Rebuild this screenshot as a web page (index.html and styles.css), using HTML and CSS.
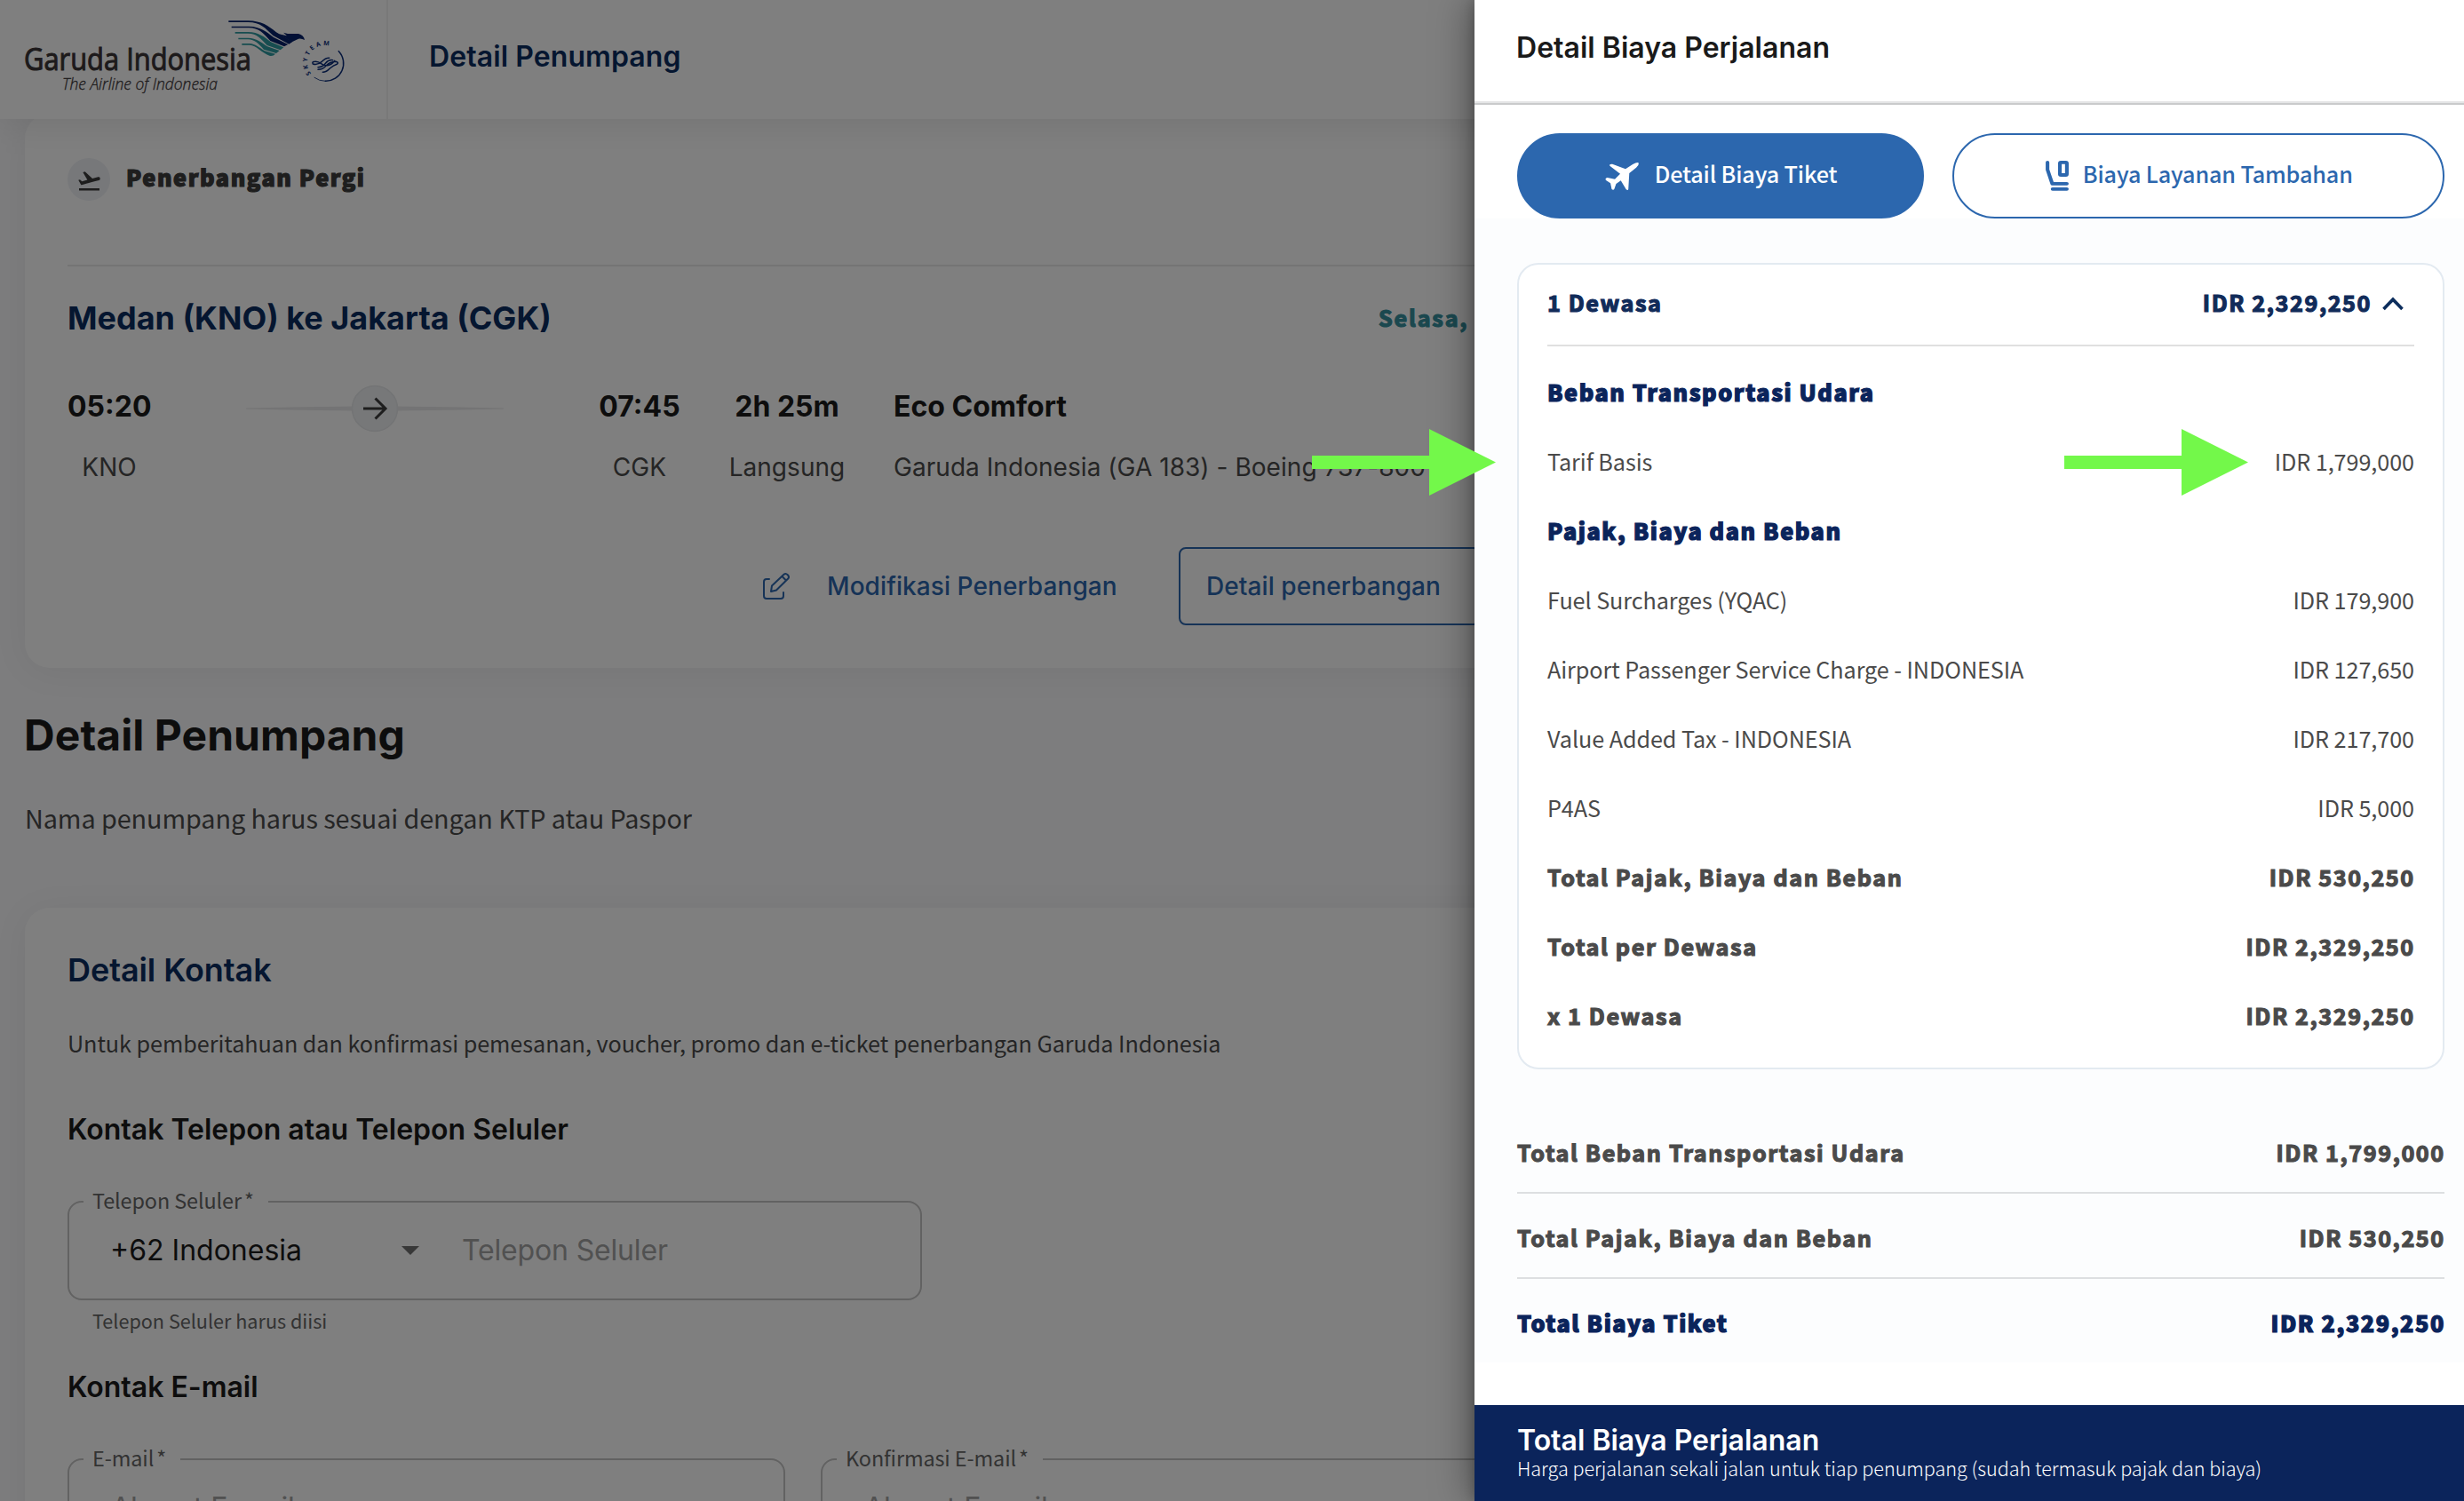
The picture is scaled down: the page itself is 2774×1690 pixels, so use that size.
FILE: index.html
```html
<!DOCTYPE html>
<html lang="id">
<head>
<meta charset="utf-8">
<title>Detail Penumpang - Garuda Indonesia</title>
<link rel="stylesheet" href="styles.css">
</head>
<body>
<div class="page">
  <header class="topbar">
    <div class="brand">
      <svg class="brand-logo" width="420" height="128" viewBox="0 0 420 128">
        <text class="logo-name" x="27" y="79" textLength="256" lengthAdjust="spacingAndGlyphs">Garuda Indonesia</text>
        <text class="logo-tag" x="70" y="101" textLength="175" lengthAdjust="spacingAndGlyphs">The Airline of Indonesia</text>
        <g transform="translate(250 15) scale(.33333)">
          <g fill="#04206b">
            <path d="M22 25H88C134 26 156 42 183 64L238 96L226 104L172 75C146 50 130 30 88 30H22Z"/>
            <path d="M32 44H90C131 45 150 62 174 81L223 105L210 112L163 93C140 69 126 49 90 49H32Z"/>
            <path d="M207 65L222 69L258 69Q276 74 279 90Q268 84 258 86L236 97L192 70L219 76Z"/>
          </g>
          <g fill="#2f9aa0">
            <path d="M44 63H88C124 64 144 80 165 97L208 115L197 124L152 108C132 86 118 68 88 68H44Z"/>
            <path d="M55 83H88C116 84 134 98 153 112L194 126L183 135L141 122C124 103 110 88 88 88H55Z"/>
            <path d="M67 102H93C112 103 127 116 144 127L180 137Q172 146 160 143C134 134 116 107 93 107H67Z"/>
          </g>
          <g fill="none" stroke="#0a2d7a" stroke-linecap="round">
            <path stroke-width="4.5" d="M394 128A60 60 0 0 1 349 229"/>
            <path stroke-width="2.5" d="M349 229Q328 229 312 217"/>
            <path stroke-width="4.5" d="M307 171Q302 163 314 163C335 162 338 180 356 176Q372 173 380 160M307 171Q322 176 337 163Q350 150 362 151M324 182Q340 182 350 168Q360 156 374 158M324 190Q342 190 352 176Q364 164 384 163Q396 166 388 172Q376 176 364 186Q352 199 340 199"/>
          </g>
          <path id="ring" d="M301 204A59 59 0 0 1 384 121" fill="none"/>
          <text class="logo-sky"><textPath href="#ring" textLength="148">SKYTEAM</textPath></text>
        </g>
      </svg>
    </div>
    <div class="topbar-title">Detail Penumpang</div>
  </header>

  <main class="main">
    <section class="card flight">
      <div class="flight-head">
        <span class="badge"><svg width="29" height="29" viewBox="0 0 24 24" fill="#3a3a3a"><path d="M2.5 19h19v2h-19zM22.07 9.64c-.21-.8-1.04-1.28-1.84-1.06L14.92 10l-6.9-6.43-1.93.51 4.14 7.17-4.97 1.33-1.97-1.54-1.45.39 2.59 4.49s7.12-1.9 16.57-4.43c.81-.23 1.28-1.05 1.07-1.85z"/></svg></span>
        <span class="flight-kind">Penerbangan Pergi</span>
      </div>
      <hr class="rule">
      <div class="route">
        <h2 class="route-name">Medan (KNO) ke Jakarta (CGK)</h2>
        <span class="route-date">Selasa, 0</span>
      </div>
      <div class="times">
        <b>05:20</b>
        <span class="leg">
          <svg width="290" height="54" viewBox="0 0 290 54">
            <path d="M0 26.500L60 25.200L120 24.500H170L230 25.200L290 26.500V27.500L230 28.800L170 29.500H120L60 28.800L0 27.500Z" fill="#e9e9ea"/>
            <circle cx="145" cy="27" r="25.5" fill="#eef0f3" stroke="#e6e8ea" stroke-width="1.5"/>
            <path d="M132 27H156M145.5 15.500L157 27L145.500 38.500" fill="none" stroke="#3c3c3c" stroke-width="3"/>
          </svg>
        </span>
        <b>07:45</b><b class="lasting">2h 25m</b><b class="cabin">Eco Comfort</b>
      </div>
      <div class="codes">
        <span>KNO</span><span></span><span>CGK</span><span class="lasting">Langsung</span><span class="cabin">Garuda Indonesia (GA 183) - Boeing 737-800</span>
      </div>
      <div class="actions">
        <svg class="edit" width="32" height="32" viewBox="0 0 32 32" fill="none" stroke="#2c67ae" stroke-width="2" stroke-linejoin="round" stroke-linecap="round"><path d="M8 8H5Q2 8 2 11V27Q2 30 5 30H21Q24 30 24 27V23M10 22L11 15.500L24.500 2.800Q26.500 1 28.800 3.200Q31 5.500 29.200 7.500L16 20.500ZM22.500 5L27 9.500"/></svg>
        <a class="modify">Modifikasi Penerbangan</a>
        <a class="detail-btn">Detail penerbangan</a>
      </div>
    </section>

    <h1 class="page-title">Detail Penumpang</h1>
    <p class="page-note">Nama penumpang harus sesuai dengan KTP atau Paspor</p>

    <section class="card contact">
      <h2 class="contact-title">Detail Kontak</h2>
      <p class="contact-note">Untuk pemberitahuan dan konfirmasi pemesanan, voucher, promo dan e-ticket penerbangan Garuda Indonesia</p>
      <h3 class="group">Kontak Telepon atau Telepon Seluler</h3>
      <div class="field phone">
        <span class="label">Telepon Seluler<i>*</i></span>
        <span class="country">+62 Indonesia</span>
        <span class="caret"></span>
        <span class="placeholder">Telepon Seluler</span>
      </div>
      <p class="helper">Telepon Seluler harus diisi</p>
      <h3 class="group">Kontak E-mail</h3>
      <div class="fields">
        <div class="field email"><span class="label">E-mail<i>*</i></span><span class="placeholder">Alamat E-mail</span></div>
        <div class="field email"><span class="label">Konfirmasi E-mail<i>*</i></span><span class="placeholder">Alamat E-mail</span></div>
      </div>
    </section>
  </main>
</div>

<div class="backdrop"></div>

<aside class="drawer">
  <div class="drawer-head">Detail Biaya Perjalanan</div>
  <div class="tabs">
    <button class="tab tab-on">
      <svg width="41" height="35" viewBox="14 90 116 105" preserveAspectRatio="none" fill="#fff"><path d="M124 98Q121 93 105 102L82 118L40 101Q29 100 32 107L65 134L48 152L24 147Q15 150 20 156L34 166L38 186Q43 191 46 186L52 168L67 157L84 187Q90 192 91 186L94 132L116 113Q125 105 124 98Z"/></svg>
      <span>Detail Biaya Tiket</span>
    </button>
    <button class="tab">
      <svg width="30" height="38" viewBox="1400 90 84 114" preserveAspectRatio="none" fill="none" stroke="#2c67ae" stroke-width="11.500" stroke-linecap="round" stroke-linejoin="round"><path d="M1411.500 101.500V126L1426.500 173.500H1472.500M1427.500 191.500H1472.500"/><rect x="1450.500" y="101.500" width="22" height="42.500" rx="3"/></svg>
      <span>Biaya Layanan Tambahan</span>
    </button>
  </div>
  <div class="drawer-body">
    <section class="fare">
      <div class="fare-head">
        <span>1 Dewasa</span>
        <span class="fare-sum">IDR 2,329,250
          <svg width="28" height="18" viewBox="0 0 28 18" fill="none" stroke="#0c2d5c" stroke-width="3.600"><path d="M3.500 15L14 4.200L24.500 15"/></svg>
        </span>
      </div>
      <div class="row head">Beban Transportasi Udara</div>
      <div class="row"><span>Tarif Basis</span><span>IDR 1,799,000</span></div>
      <div class="row head">Pajak, Biaya dan Beban</div>
      <div class="row"><span>Fuel Surcharges (YQAC)</span><span>IDR 179,900</span></div>
      <div class="row"><span>Airport Passenger Service Charge - INDONESIA</span><span>IDR 127,650</span></div>
      <div class="row"><span>Value Added Tax - INDONESIA</span><span>IDR 217,700</span></div>
      <div class="row"><span>P4AS</span><span>IDR 5,000</span></div>
      <div class="row strong"><span>Total Pajak, Biaya dan Beban</span><span>IDR 530,250</span></div>
      <div class="row strong"><span>Total per Dewasa</span><span>IDR 2,329,250</span></div>
      <div class="row strong"><span>x 1 Dewasa</span><span>IDR 2,329,250</span></div>
    </section>
    <div class="totals">
      <div class="total strong"><span>Total Beban Transportasi Udara</span><span>IDR 1,799,000</span></div>
      <div class="total strong"><span>Total Pajak, Biaya dan Beban</span><span>IDR 530,250</span></div>
      <div class="total head"><span>Total Biaya Tiket</span><span>IDR 2,329,250</span></div>
    </div>
  </div>
  <footer class="drawer-foot">
    <div class="foot-title">Total Biaya Perjalanan</div>
    <div class="foot-note">Harga perjalanan sekali jalan untuk tiap penumpang (sudah termasuk pajak dan biaya)</div>
  </footer>
</aside>

<svg class="pointer pointer-left" width="207" height="75" viewBox="0 0 207 75"><path d="M0 30H132V0L207 37.500L132 75V45H0Z" fill="#73f84a"/></svg>
<svg class="pointer pointer-right" width="207" height="75" viewBox="0 0 207 75"><path d="M0 30H132V0L207 37.500L132 75V45H0Z" fill="#73f84a"/></svg>
</body>
</html>
```
FILE: styles.css
```css
* { box-sizing: border-box; margin: 0; padding: 0; }
html, body { width: 2774px; height: 1690px; overflow: hidden; }
body { position: relative; background: #fafafc; color: #4a4a4a; font-family: "Noto Sans CJK SC", sans-serif; white-space: nowrap; }

.page { width: 2774px; height: 1690px; overflow: hidden; }

.topbar { position: relative; z-index: 1; display: flex; height: 134px; background: #fff; box-shadow: 0 4px 40px rgba(0, 0, 0, .1); }
.brand { width: 437px; border-right: 2px solid #f3f3f3; }
.brand-logo { display: block; }
.logo-name { font: 400 34.500px "Open Sans", sans-serif; fill: #3a3436; stroke: #3a3436; stroke-width: 1px; }
.logo-tag { font: italic 300 19px "Open Sans", sans-serif; fill: #3a3436; stroke: #3a3436; stroke-width: .3px; }
.logo-sky { font: 700 21px "Open Sans", sans-serif; fill: #0a2d7a; }
.topbar-title { padding-left: 46px; font: 600 32px/128px Inter, sans-serif; letter-spacing: .080px; color: #0a2c60; }

.card { margin-left: 28px; margin-right: 28px; background: #fff; border-radius: 28px; box-shadow: 0 4px 40px rgba(0, 0, 0, .06); }
.flight { height: 624px; margin-top: -6px; padding: 50px 48px 0; }
.flight-head { display: flex; align-items: center; gap: 18px; height: 48px; margin-bottom: 72px; }
.badge { display: flex; align-items: center; justify-content: center; width: 48px; height: 48px; padding-top: 3px; border-radius: 50%; background: #eef1f5; }
.flight-kind { padding-bottom: 6px; font-size: 25.200px; font-weight: 900; line-height: 36px; letter-spacing: 1.600px; -webkit-text-stroke: 1.200px; color: #3c3c3c; }
.rule { height: 2px; border: 0; background: #e8e8e8; }
.route { display: flex; justify-content: flex-start; margin-top: 36px; height: 45px; }
.route-name { width: 1475px; font: 700 36px/44px Inter, sans-serif; color: #0a2c60; }
.route-date { margin-top: 1px; padding-left: 1px; font-size: 25.200px; font-weight: 700; line-height: 40px; letter-spacing: 1.800px; -webkit-text-stroke: 1.200px; color: #36909e; }
.times, .codes { display: grid; grid-template-columns: 94px 503px 94px 236px 1fr; text-align: center; }
.times { margin-top: 57px; height: 40px; font: 700 32px/40px Inter, sans-serif; color: #1a1a1a; }
.times b { font-weight: 700; }
.leg { display: flex; align-items: center; justify-content: center; height: 44px; }
.codes { margin-top: 30px; height: 36px; font: 400 28px/36px Inter, sans-serif; letter-spacing: .050px; }
.lasting { padding-left: 2px; }
.times .cabin, .codes .cabin { padding-left: 3px; text-align: left; }
.actions { display: flex; align-items: center; margin-top: 72px; height: 88px; padding-left: 782px; font: 500 28px/36px Inter, sans-serif; letter-spacing: .080px; color: #2c67ae; }
.edit { flex: none; }
.modify { flex: none; width: 437px; padding-left: 41px; }
.detail-btn { display: flex; align-items: center; width: 340px; height: 88px; padding-left: 29px; border: 2px solid #2c67ae; border-radius: 8px; }

.page-title { margin: 47px 0 43px 27px; font: 700 48px/58px Inter, sans-serif; letter-spacing: .060px; color: #1a1a1a; }
.page-note { margin: 0 0 80px 28px; font-size: 28.800px; line-height: 42px; letter-spacing: -.090px; }

.contact { height: 900px; padding: 48px 48px 0; }
.contact-title { font: 600 36px/44px Inter, sans-serif; letter-spacing: -.080px; color: #0a2c60; }
.contact-note { margin: 42px 0 60px; font-size: 25.200px; line-height: 36px; letter-spacing: -.050px; }
.group { font: 600 32px/40px Inter, sans-serif; color: #1a1a1a; }
.field { position: relative; display: flex; align-items: center; height: 112px; margin-top: 60px; border: 2px solid #c4c4c4; border-radius: 16px; font: 400 32px/40px Inter, sans-serif; }
.phone { width: 962px; padding-left: 46px; }
.country { width: 328px; color: #1a1a1a; }
.caret { width: 20px; height: 10px; margin-right: 48px; background: #707070; clip-path: polygon(0 0, 100% 0, 50% 100%); }
.placeholder { letter-spacing: -.160px; color: #a2a2a2; }
.label { position: absolute; top: -18px; left: 16px; padding: 0 16px 0 10px; background: #fff; font: 400 23.400px/30px "Noto Sans CJK SC", sans-serif; letter-spacing: -.100px; color: #666; }
.label i { margin-left: 3px; font-style: normal; }
.helper { margin: 8px 0 40px; padding-left: 28px; font-size: 21.600px; line-height: 30px; color: #666; }
.fields { display: flex; gap: 40px; }
.email { width: 808px; padding-left: 47px; }

.backdrop { position: absolute; inset: 0; z-index: 2; background: rgba(0, 0, 0, .5); }

.drawer { position: absolute; top: 0; right: 0; z-index: 3; display: flex; flex-direction: column; width: 1114px; height: 1690px; background: #fff; box-shadow: -6px 0 40px rgba(0, 0, 0, .35), 0 0 14px rgba(0, 0, 0, .25); font-size: 25.200px; line-height: 36px; }
.drawer-head { height: 118px; padding-left: 47px; border-bottom: 2px solid #c9cacb; box-shadow: inset 0 -2px #e4e5e6; font: 600 32px/108px Inter, sans-serif; letter-spacing: .020px; color: #1a1a1a; }
.tabs { display: flex; gap: 32px; height: 128px; padding: 32px 22px 0 48px; }
.tab { display: flex; align-items: center; justify-content: center; gap: 13.500px; width: 554px; height: 96px; border: 2px solid #2c67ae; border-radius: 48px; background: #fff; font: 500 25.200px/36px "Noto Sans CJK SC", sans-serif; letter-spacing: -.140px; color: #2c67ae; }
.tab span { padding-bottom: 6px; }
.tab-on { gap: 16px; width: 458px; background: #2c67ae; color: #fff; }
.drawer-body { height: 1288px; padding: 50px 22px 0 48px; background: #fcfdfe; }
.fare { height: 908px; padding: 0 32px; border: 2px solid #e3eaf1; border-radius: 24px; background: #fff; }
.fare-head { display: flex; justify-content: space-between; height: 92px; margin-bottom: 12px; border-bottom: 2px solid #e0e0e0; font-weight: 700; line-height: 84px; letter-spacing: 1.580px; -webkit-text-stroke: 1.200px; color: #112b59; }
.fare-sum { display: flex; align-items: center; gap: 10px; height: 84px; padding-right: 10px; }
.fare-sum svg { margin-top: 4px; }
.row { display: flex; justify-content: space-between; height: 78px; line-height: 78px; letter-spacing: -.070px; }
.strong { font-weight: 700; letter-spacing: 1.600px; -webkit-text-stroke: 1.200px; }
.head { font-weight: 900; letter-spacing: 1.570px; -webkit-text-stroke: 1.200px; color: #0b245b; }
.strong span:last-child, .total.head span:last-child { margin-right: -.800px; }
.totals { margin-top: 44px; }
.total { display: flex; justify-content: space-between; height: 96px; padding-top: 4px; border-bottom: 2px solid #dddfe1; line-height: 90px; }
.total:last-child { border-color: transparent; }
.drawer-foot { flex: 1; margin-top: 48px; padding: 21px 48px 0; background: #0b245b; color: #fff; }
.foot-title { font: 600 32px/38px Inter, sans-serif; }
.foot-note { font-size: 21.600px; font-weight: 300; line-height: 24px; letter-spacing: -.030px; }

.pointer { position: absolute; top: 483px; z-index: 4; }
.pointer-left { left: 1477px; }
.pointer-right { left: 2324px; }
```
